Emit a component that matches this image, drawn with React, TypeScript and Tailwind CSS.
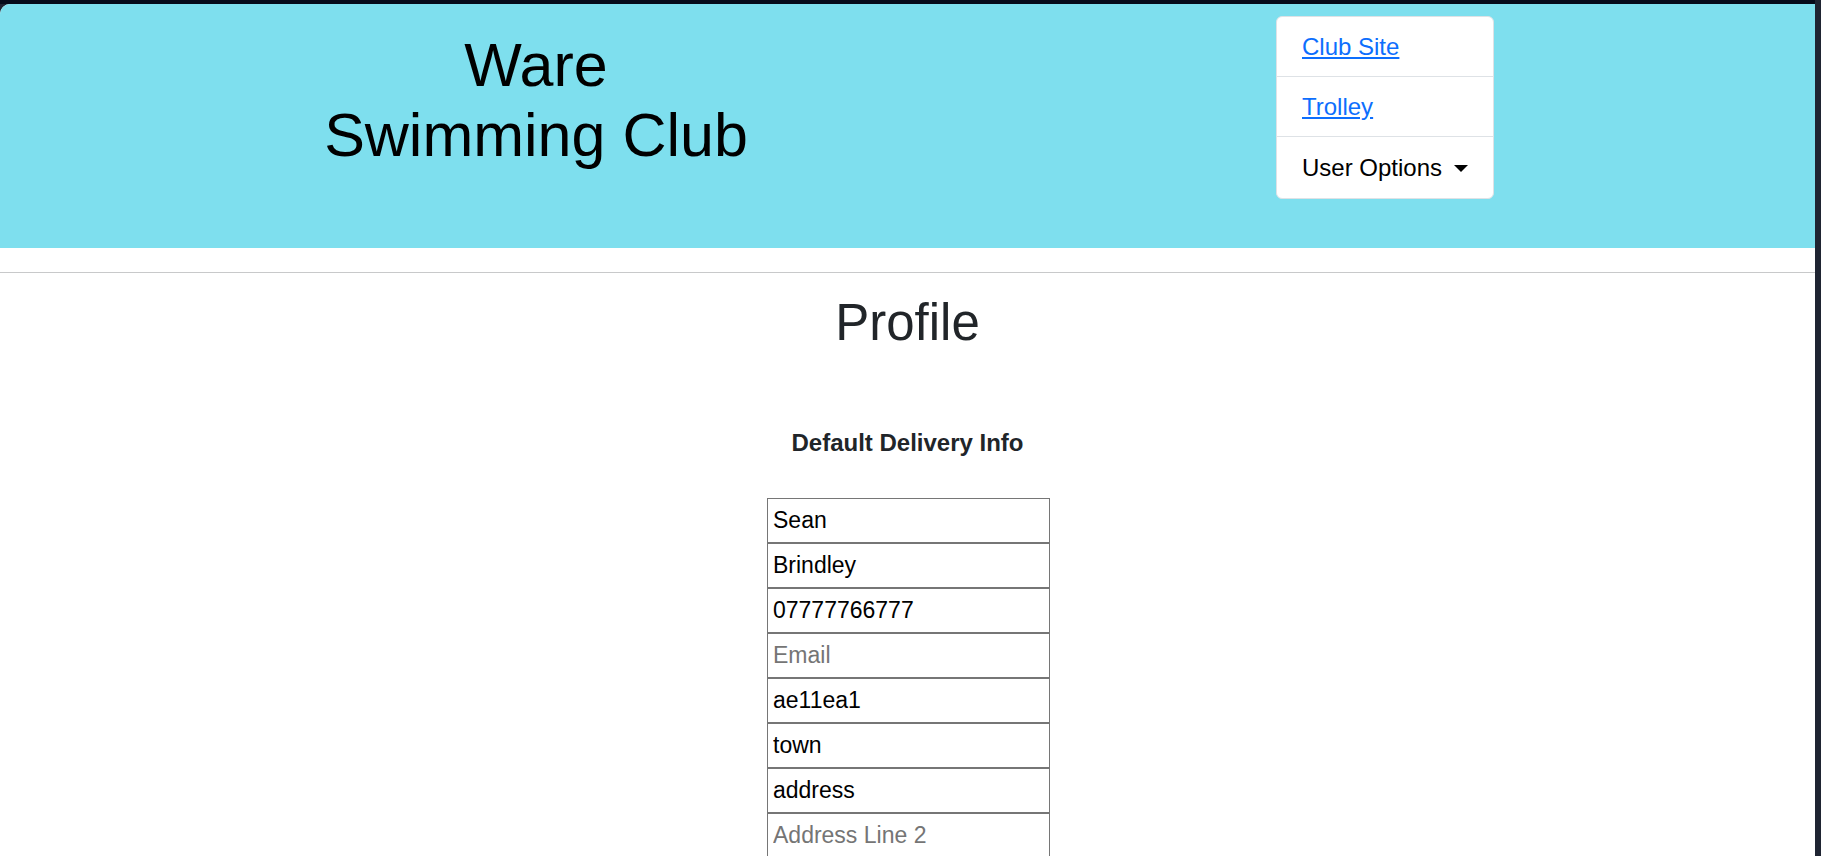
import { useState } from 'react'

const NAV_LINKS = [
  { label: 'Club Site', href: '#club' },
  { label: 'Trolley', href: '#trolley' },
]

const FIELDS: ReadonlyArray<{ name: string; placeholder: string; value: string }> = [
  { name: 'firstName', placeholder: 'First Name', value: 'Sean' },
  { name: 'lastName', placeholder: 'Last Name', value: 'Brindley' },
  { name: 'phone', placeholder: 'Phone Number', value: '07777766777' },
  { name: 'email', placeholder: 'Email', value: '' },
  { name: 'postcode', placeholder: 'Postcode', value: 'ae11ea1' },
  { name: 'town', placeholder: 'Town', value: 'town' },
  { name: 'address1', placeholder: 'Address Line 1', value: 'address' },
  { name: 'address2', placeholder: 'Address Line 2', value: '' },
  { name: 'county', placeholder: 'County', value: '' },
]

function Header() {
  const [open, setOpen] = useState(false)

  return (
    <header className="flex h-[244px] bg-[#7edfee]">
      <div className="w-[1072px] pt-[26px] text-center">
        <h1 className="text-[61px] leading-[70px] text-black">
          Ware
          <br />
          Swimming Club
        </h1>
      </div>

      <nav className="ml-[204px] mt-[12px] h-[183px] w-[218px] shrink-0 overflow-hidden rounded-[6px] border border-[#dee2e6] bg-white text-[24px]">
        {NAV_LINKS.map((link) => (
          <div
            key={link.label}
            className="flex h-[60px] items-center border-b border-[#dee2e6] px-[25px]"
          >
            <a href={link.href} className="text-[#0d6efd] underline">
              {link.label}
            </a>
          </div>
        ))}
        <button
          type="button"
          onClick={() => setOpen(!open)}
          className="flex h-[61px] w-full items-center justify-start whitespace-nowrap pl-[25px] text-left text-black"
        >
          User Options
          <span className="ml-[12px] mt-[2px] h-0 w-0 shrink-0 border-x-[7px] border-t-[7px] border-x-transparent border-t-black" />
        </button>
      </nav>
    </header>
  )
}

export default function App() {
  return (
    <div className="h-[856px] overflow-hidden bg-[#1f2432] pr-[6px] font-['Liberation_Sans',Arial,sans-serif]">
      <div className="h-[4px] bg-[#060b1a]" />
      <div className="h-[852px] overflow-hidden rounded-tl-[10px] bg-white">
        <Header />

        <hr className="mt-[24px] border-t border-[#c8c9ca]" />

        <main className="flex flex-col items-center">
          <h2 className="mt-[20px] text-[51px] leading-[60px] text-[#212529]">Profile</h2>

          <h3 className="mt-[76px] text-[24px] font-bold leading-[28px] text-[#212529]">
            Default Delivery Info
          </h3>

          <form className="ml-[2px] mt-[41px] flex w-[283px] flex-col">
            {FIELDS.map((field) => (
              <input
                key={field.name}
                name={field.name}
                placeholder={field.placeholder}
                defaultValue={field.value}
                className="h-[45px] w-full border border-[#767676] bg-white px-[5px] text-[23px] text-black placeholder:text-[#757575]"
              />
            ))}
          </form>
        </main>
      </div>
    </div>
  )
}
